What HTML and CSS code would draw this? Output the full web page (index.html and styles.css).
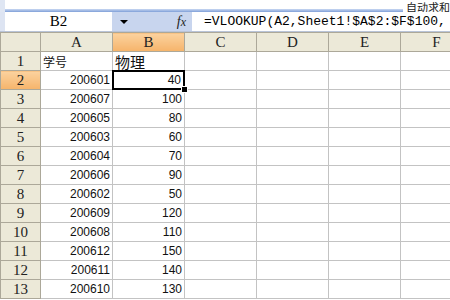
FILE: index.html
```html
<!DOCTYPE html>
<html lang="zh">
<head>
    <meta charset="UTF-8">
    <title>VLOOKUP</title>
    <link rel="stylesheet" href="styles.css">
</head>
<body>
    <div class="app">
        <div class="toolbar">
            <div class="tb-bar"></div>
            <span class="tb-label">自动求和</span>
        </div>

        <div class="formula-bar">
            <div class="name-box">B2</div>
            <div class="fx-area">
                <span class="arrow"></span>
                <span class="fx"><i>f</i>x</span>
            </div>
            <div class="formula">=VLOOKUP(A2,Sheet1!$A$2:$F$100,</div>
        </div>

        <table class="sheet">
            <colgroup>
                <col class="c-head">
                <col class="c-col"><col class="c-col"><col class="c-col">
                <col class="c-col"><col class="c-col"><col class="c-col">
            </colgroup>
            <thead>
                <tr>
                    <th class="corner"></th>
                    <th>A</th>
                    <th class="active">B</th>
                    <th>C</th>
                    <th>D</th>
                    <th>E</th>
                    <th>F</th>
                </tr>
            </thead>
            <tbody>
                <tr><th>1</th><td class="txt">学号</td><td class="txt big">物理</td><td></td><td></td><td></td><td></td></tr>
                <tr><th class="active">2</th><td>200601</td><td class="sel">40</td><td></td><td></td><td></td><td></td></tr>
                <tr><th>3</th><td>200607</td><td>100</td><td></td><td></td><td></td><td></td></tr>
                <tr><th>4</th><td>200605</td><td>80</td><td></td><td></td><td></td><td></td></tr>
                <tr><th>5</th><td>200603</td><td>60</td><td></td><td></td><td></td><td></td></tr>
                <tr><th>6</th><td>200604</td><td>70</td><td></td><td></td><td></td><td></td></tr>
                <tr><th>7</th><td>200606</td><td>90</td><td></td><td></td><td></td><td></td></tr>
                <tr><th>8</th><td>200602</td><td>50</td><td></td><td></td><td></td><td></td></tr>
                <tr><th>9</th><td>200609</td><td>120</td><td></td><td></td><td></td><td></td></tr>
                <tr><th>10</th><td>200608</td><td>110</td><td></td><td></td><td></td><td></td></tr>
                <tr><th>11</th><td>200612</td><td>150</td><td></td><td></td><td></td><td></td></tr>
                <tr><th>12</th><td>200611</td><td>140</td><td></td><td></td><td></td><td></td></tr>
                <tr><th>13</th><td>200610</td><td>130</td><td></td><td></td><td></td><td></td></tr>
            </tbody>
        </table>
    </div>
</body>
</html>
```

FILE: styles.css
```css
html, body {
    margin: 0;
    padding: 0;
    background: #fff;
    overflow: hidden;
}
.app {
    width: 450px;
    height: 300px;
    overflow: hidden;
}

/* toolbar remnant */
.toolbar {
    height: 12px;
    display: flex;
    align-items: flex-end;
    background: #fff;
    border-left: 5px solid #dfe6f3;
    box-sizing: border-box;
}
.tb-bar {
    width: 398px;
    height: 3px;
    background: linear-gradient(#c9d8f2, #7f9fd8);
}
.tb-label {
    font-family: "Noto Sans CJK SC", sans-serif;
    font-size: 11px;
    line-height: 11px;
    color: #222;
    margin-left: 3px;
    white-space: nowrap;
    align-self: flex-start;
    padding-top: 2px;
}

/* formula bar */
.formula-bar {
    height: 19px;
    display: flex;
    background: #dde4f2;
    border-bottom: 1px solid #b9c4d8;
}
.name-box {
    width: 107px;
    margin-left: 5px;
    background: #fff;
    font-family: "Liberation Serif", serif;
    font-size: 15px;
    line-height: 19px;
    text-align: center;
}
.fx-area {
    width: 80px;
    background: #c8d5ee;
    display: flex;
    align-items: center;
    justify-content: space-between;
    padding: 0 6px 0 8px;
    box-sizing: border-box;
}
.arrow {
    width: 0;
    height: 0;
    border-left: 4px solid transparent;
    border-right: 4px solid transparent;
    border-top: 4px solid #000;
}
.fx {
    font-family: "Liberation Serif", serif;
    font-size: 12px;
    font-style: italic;
    color: #222;
}
.fx i {
    font-size: 14px;
}
.formula {
    flex: 1;
    background: #fff;
    padding-left: 12px;
    font-family: "Liberation Mono", monospace;
    font-size: 13px;
    line-height: 19px;
    white-space: nowrap;
    overflow: hidden;
}

/* grid */
.sheet {
    border-collapse: collapse;
    table-layout: fixed;
    width: 472px;
}
.c-head {
    width: 40px;
}
.c-col {
    width: 72px;
}
.sheet th,
.sheet td {
    height: 18px;
    padding: 0 2px;
    border: 1px solid #c3c3c3;
    overflow: hidden;
    white-space: nowrap;
}
.sheet th {
    background: #ece9d8;
    border-color: #aca899;
    font-family: "Liberation Serif", serif;
    font-size: 15px;
    font-weight: normal;
    text-align: center;
    color: #222;
}
.sheet th.active {
    background: linear-gradient(#fbd29f, #f6b46a);
}
.sheet td {
    font-family: "Liberation Sans", sans-serif;
    font-size: 12px;
    text-align: right;
    color: #111;
}
.sheet td:nth-child(3) {
    border-left-color: #8a8a8a;
}
.sheet td.txt {
    text-align: left;
    font-family: "Noto Sans CJK SC", sans-serif;
    font-size: 12px;
}
.sheet td.big {
    font-size: 15px;
    line-height: 17px;
    overflow: visible;
}
.sheet td.sel {
    position: relative;
    overflow: visible;
    padding-right: 3px;
}
.sheet td.sel::before {
    content: "";
    position: absolute;
    left: -1px;
    top: -1px;
    right: -1px;
    bottom: -1px;
    border: 2px solid #000;
}
.sheet td.sel::after {
    content: "";
    position: absolute;
    right: -4px;
    bottom: -4px;
    width: 5px;
    height: 5px;
    background: #000;
    border: 1px solid #fff;
}
```
